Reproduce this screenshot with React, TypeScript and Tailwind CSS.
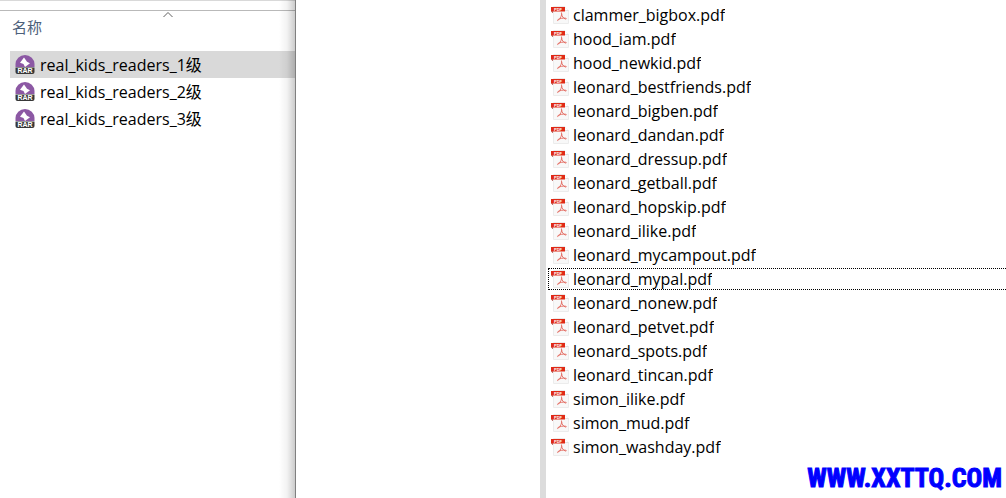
import { clsx } from 'clsx'

const archives = ['real_kids_readers_1级', 'real_kids_readers_2级', 'real_kids_readers_3级']

const documents = [
  'clammer_bigbox.pdf',
  'hood_iam.pdf',
  'hood_newkid.pdf',
  'leonard_bestfriends.pdf',
  'leonard_bigben.pdf',
  'leonard_dandan.pdf',
  'leonard_dressup.pdf',
  'leonard_getball.pdf',
  'leonard_hopskip.pdf',
  'leonard_ilike.pdf',
  'leonard_mycampout.pdf',
  'leonard_mypal.pdf',
  'leonard_nonew.pdf',
  'leonard_petvet.pdf',
  'leonard_spots.pdf',
  'leonard_tincan.pdf',
  'simon_ilike.pdf',
  'simon_mud.pdf',
  'simon_washday.pdf',
]

const selectedArchive = archives[0]
const focusedDocument = 'leonard_mypal.pdf'

export default function App() {
  return (
    <main className="relative grid min-h-screen grid-cols-[296fr_244fr_466fr] overflow-hidden bg-white font-['Open_Sans','Noto_Sans_CJK_SC',sans-serif] text-base text-black">
      <ArchivePanel />
      <div />
      <DocumentPanel />
      <p className="absolute right-1 bottom-1 font-['Impact','Roboto_Condensed','Liberation_Sans',sans-serif] text-[26px] leading-8 font-bold text-[#0000ff] [-webkit-text-stroke:1px_#0000ff]">
        WWW.XXTTQ.COM
      </p>
    </main>
  )
}

function ArchivePanel() {
  return (
    <section className="relative min-w-0 border-r border-[#808080]">
      <div className="h-[11px] border-t border-b border-t-[#d9d9d9] border-b-[#b9b9b9]" />
      <button className="relative flex h-10 w-full items-start px-3 pt-1 text-left text-[15px] leading-6 text-[#4c607a]">
        名称
        <svg className="absolute top-0 left-[55%] h-2 w-3" viewBox="0 0 12 8" fill="none" stroke="#606060">
          <path d="M1.5 6 6 1.5 10.5 6" />
        </svg>
      </button>
      <ul className="pl-[10px]">
        {archives.map((name) => (
          <li
            key={name}
            className={clsx('flex h-[27px] items-center gap-[5px] pl-[5px]', name === selectedArchive && 'bg-[#d9d9d9]')}
          >
            <RarIcon />
            <span className="truncate leading-6">{name}</span>
          </li>
        ))}
      </ul>
      {/* Window shadow */}
      <div className="pointer-events-none absolute inset-y-0 right-0 w-4 bg-linear-to-r from-transparent via-black/5 to-black/20" />
    </section>
  )
}

function DocumentPanel() {
  return (
    <section className="min-w-0 border-l-[6px] border-[#dcdcdc] pt-1 pl-0.5">
      <ul className="flex flex-col gap-0.5">
        {documents.map((name) => (
          <li
            key={name}
            className={clsx(
              'flex h-[22px] items-center gap-1 border border-r-0 border-dotted pl-0.5',
              name === focusedDocument ? 'border-black' : 'border-transparent'
            )}
          >
            <PdfIcon />
            <span className="truncate leading-6">{name}</span>
          </li>
        ))}
      </ul>
    </section>
  )
}

function RarIcon() {
  return (
    <svg className="h-5 w-5 shrink-0" viewBox="0 0 20 20">
      <path d="M.5 12V9a9.500 9 0 0 1 19 0v3z" fill="#8c58a4" />
      <path d="m9 2.500-4 5.300 3.500 1.200L10 12l5-3.800-3-1.500z" fill="#fff" />
      <path d="M.5 12.500h19V17a2 2 0 0 1-2 2h-15a2 2 0 0 1-2-2z" fill="#383838" />
      <text
        x="10"
        y="18"
        textAnchor="middle"
        className="font-['Liberation_Sans',sans-serif] text-[7px] font-bold"
        fill="#fff"
      >
        RAR
      </text>
    </svg>
  )
}

function PdfIcon() {
  return (
    <svg className="h-[18px] w-[18px] shrink-0" viewBox="0 0 18 18">
      <path d="M2.500.500h11l4 4v13h-15z" fill="#f8f8f8" stroke="#ececec" />
      <path d="M13.500.500v4h4" fill="#fff" stroke="#e2e2e2" />
      <path d="M0 1h14v4.500H0z" fill="#e02a16" />
      <path d="m0 5.500 2 1.500V5.500z" fill="#981a10" />
      <text
        x="7"
        y="5"
        textAnchor="middle"
        className="font-['Liberation_Sans',sans-serif] text-[4px] font-bold"
        fill="#fff"
      >
        PDF
      </text>
      <path
        d="M10.500 6.500c.8 2.300-.8 5.500-3.300 7.800-.8.600-1-.3 0-.9 2-1 4.800-1.500 7.300-1.200 1.300.2 1 1.200-.2.800-2-.7-3.500-3-3.800-5.200"
        fill="none"
        stroke="#e2675c"
        strokeWidth=".9"
      />
    </svg>
  )
}
